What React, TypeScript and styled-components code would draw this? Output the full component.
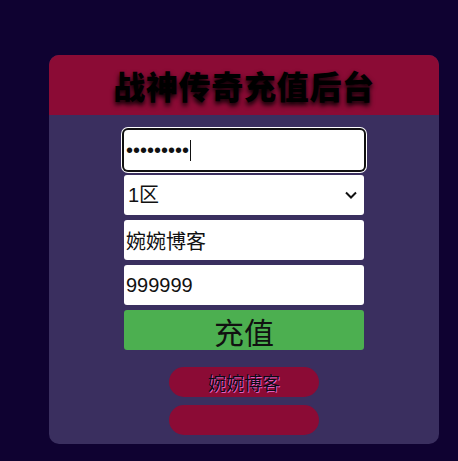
import React from 'react';
import styled, { createGlobalStyle, css } from 'styled-components';

const GlobalStyle = createGlobalStyle`
  html, body {
    margin: 0;
    padding: 0;
    background: #0f0231;
  }
  body {
    font-family: "Liberation Sans", "Noto Sans CJK SC", sans-serif;
  }
`;

const Page = styled.div`
  min-height: 461px;
  padding: 55px 0 0 49px;
  box-sizing: border-box;
`;

const Card = styled.div`
  width: 390px;
  border-radius: 10px;
  overflow: hidden;
  background: #3a2f5f;
`;

const Header = styled.div`
  display: flex;
  align-items: center;
  justify-content: center;
  height: 60px;
  background: #8b0b35;
`;

const Title = styled.h1`
  margin: 0;
  font-size: 32px;
  font-weight: 800;
  color: #000;
  text-shadow: 0 3px 5px #000;
  letter-spacing: 0.7px;
`;

const Form = styled.div`
  display: flex;
  flex-direction: column;
  align-items: center;
  gap: 5px;
  padding: 15px 0 9px;
`;

const fieldBase = css`
  box-sizing: border-box;
  width: 240px;
  height: 40px;
  border: none;
  border-radius: 3px;
  background: #fff;
  padding: 0 2px;
  font-family: "Liberation Sans", "Noto Sans CJK SC", sans-serif;
  font-size: 20px;
  color: #111;
  outline: none;
`;

const Input = styled.input<{ $focused?: boolean }>`
  ${fieldBase}
  ${({ $focused }) =>
    $focused &&
    css`
      box-shadow: 0 0 0 2px #111, 0 0 0 3px #fff;
      border-radius: 4px;
      caret-color: #111;
    `}
`;

const PasswordWrap = styled.div`
  position: relative;
  width: 240px;
  height: 40px;
`;

const Caret = styled.span`
  position: absolute;
  left: 66px;
  top: 10px;
  width: 1px;
  height: 21px;
  background: #111;
  pointer-events: none;
`;

const SelectWrap = styled.div`
  position: relative;
  width: 240px;
  height: 40px;
`;

const Select = styled.select`
  ${fieldBase}
  appearance: none;
  -webkit-appearance: none;
  padding: 0 4px;
`;

const Chevron = styled.svg`
  position: absolute;
  right: 6px;
  top: 15px;
  pointer-events: none;
`;

const Submit = styled.button`
  box-sizing: border-box;
  width: 240px;
  height: 40px;
  border: none;
  border-radius: 3px;
  background: #4caf50;
  color: #111;
  font-family: "Liberation Sans", "Noto Sans CJK SC", sans-serif;
  font-size: 30px;
  line-height: 40px;
  padding: 4px 0 0;
  cursor: pointer;
`;

const Links = styled.div`
  display: flex;
  flex-direction: column;
  align-items: center;
  gap: 8px;
  margin-top: 12px;
`;

const Pill = styled.div`
  display: flex;
  align-items: center;
  justify-content: center;
  width: 150px;
  height: 30px;
  border-radius: 15px;
  background: #8b0b35;
  font-size: 18px;
  color: #0a0a14;
  text-shadow: 1px 1px 0 #e060c0;
`;

const App: React.FC = () => {
  return (
    <Page>
      <GlobalStyle />
      <Card>
        <Header>
          <Title>战神传奇充值后台</Title>
        </Header>
        <Form>
          <PasswordWrap>
            <Input type="password" defaultValue="123456789" $focused />
            <Caret />
          </PasswordWrap>
          <SelectWrap>
            <Select defaultValue="1">
              <option value="1">1区</option>
              <option value="2">2区</option>
            </Select>
            <Chevron width="14" height="10" viewBox="0 0 14 10">
              <path d="M2 2.5 L7 7.5 L12 2.5" fill="none" stroke="#111" strokeWidth="2" />
            </Chevron>
          </SelectWrap>
          <Input type="text" defaultValue="婉婉博客" />
          <Input type="text" defaultValue="999999" />
          <Submit>充值</Submit>
          <Links>
            <Pill>婉婉博客</Pill>
            <Pill />
          </Links>
        </Form>
      </Card>
    </Page>
  );
};

export default App;
